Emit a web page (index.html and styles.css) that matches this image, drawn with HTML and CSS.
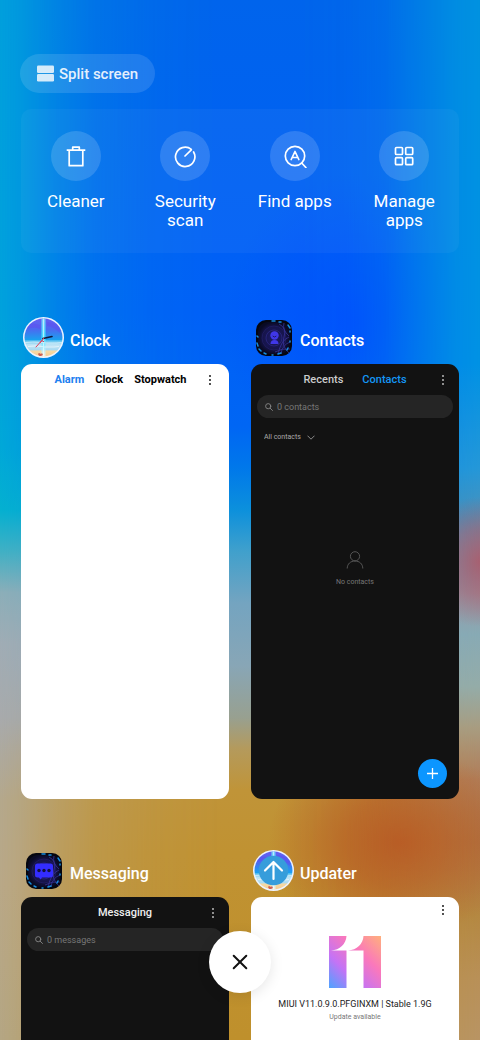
FILE: index.html
```html
<!DOCTYPE html>
<html lang="en">
<head>
<meta charset="utf-8">
<meta name="viewport" content="width=device-width, initial-scale=1">
<title>Recent apps</title>
<link rel="stylesheet" href="styles.css">
</head>
<body>
<svg class="defs" width="0" height="0" aria-hidden="true">
  <defs>
    <linearGradient id="sky" x1="0" y1="0" x2="0" y2="1">
      <stop offset="0" stop-color="#6a5cf2"/><stop offset=".3" stop-color="#4b6af0"/><stop offset=".55" stop-color="#1ba0f0"/><stop offset=".58" stop-color="#5fc4f0"/><stop offset=".68" stop-color="#c4e6f6"/><stop offset=".8" stop-color="#a9daf2"/><stop offset=".83" stop-color="#f6d9a4"/><stop offset="1" stop-color="#f4c98c"/>
    </linearGradient>
    <linearGradient id="beam" x1="0" y1="0" x2="0" y2="1">
      <stop offset="0" stop-color="#7fe6ff" stop-opacity=".8"/><stop offset=".5" stop-color="#45dcff"/><stop offset="1" stop-color="#fff" stop-opacity=".7"/>
    </linearGradient>
    <linearGradient id="rainbow" x1="0" y1="1" x2="1" y2="0">
      <stop offset="0" stop-color="#4da3ff"/><stop offset=".32" stop-color="#c473f5"/><stop offset=".65" stop-color="#fa78bb"/><stop offset="1" stop-color="#ffb07c"/>
    </linearGradient>
    <radialGradient id="night">
      <stop offset="0" stop-color="#1d1b68"/><stop offset=".7" stop-color="#16144a"/><stop offset="1" stop-color="#090a24"/>
    </radialGradient>
    <clipPath id="disc"><circle cx="20.500" cy="20.500" r="19"/></clipPath>
    <symbol id="beach" viewBox="0 0 41 41">
      <circle cx="20.500" cy="20.500" r="20.500" fill="#eef4ff"/>
      <g clip-path="url(#disc)">
        <path fill="url(#sky)" d="M0 0h41v41H0z"/>
        <path fill="#6b3df0" opacity=".3" d="M2 8q7-3 15 0v4q-8-3-15 1zM24 5q8 0 13 6v5q-6-6-13-7z"/>
        <path fill="url(#beam)" d="M18.500 0h4v41h-4z"/>
        <path fill="#fff" opacity=".55" d="M20 0h1v41h-1zM2 25q9-1 17 0t20 0v1q-10 1-20 0t-17 0zM5 29q8-1 14 0t17 0v1q-10 1-17 0t-14 0z"/>
        <path fill="#c6423c" opacity=".8" d="M15 37l1-1 2 1 1-1 1 2-2 1h-2z"/>
      </g>
    </symbol>
    <symbol id="neon" viewBox="0 0 36 36">
      <rect width="36" height="36" rx="10" fill="#05060f"/>
      <rect x="2" y="2" width="32" height="32" rx="10" fill="url(#night)"/>
      <g fill="none" stroke="#413bb0" stroke-width=".8" opacity=".8">
        <path d="M22 34q3-14 11-17M25 34q1-9 9-12M23 4q8 4 5 13t5 16M28 3q-2 7 5 13M19 32q7-4 15-3"/>
        <circle cx="18" cy="18" r="12" opacity=".35"/><circle cx="18" cy="18" r="8" opacity=".6"/>
      </g>
      <path fill="none" stroke="#168de0" stroke-width="1.500" stroke-linecap="round" d="M16 1h3M23 2h2M32 5l2 3M34 11v1M1 16l1 1M1 23l1 3M3 29l2 2M8 33l2 1M16 35h1M22 34l3-1M31 30l1-2M34 22v-1"/>
    </symbol>
    <symbol id="dots" viewBox="0 0 4 12">
      <g fill="currentColor"><circle cx="2" cy="2" r=".9"/><circle cx="2" cy="6" r=".9"/><circle cx="2" cy="10" r=".9"/></g>
    </symbol>
    <symbol id="search" viewBox="0 0 8 8">
      <g fill="none" stroke="currentColor" stroke-width=".9" stroke-linecap="round"><circle cx="3.200" cy="3.200" r="2.600"/><path d="M5.200 5.200L7.500 7.500"/></g>
    </symbol>
  </defs>
</svg>

<main class="recents">
  <button class="split" type="button">
    <svg width="17" height="17" viewBox="0 0 17 17" aria-hidden="true"><g fill="currentColor" opacity=".9"><rect y=".5" width="17" height="7.500" rx="1.300"/><rect y="9" width="17" height="7.500" rx="1.300"/></g></svg>
    Split screen
  </button>

  <nav class="tools" aria-label="Tools">
    <button class="tool" type="button">
      <span class="tool-icon"><svg width="24" height="24" viewBox="0 0 24 24" fill="none" stroke="currentColor" stroke-width="1.700" aria-hidden="true"><path d="M2.700 6.200h18.600M5.200 6.200v15.500h13.600V6.200M8.700 6V3.200h6.600V6" stroke-linejoin="round"/></svg></span>
      <span class="tool-label">Cleaner</span>
    </button>
    <button class="tool" type="button">
      <span class="tool-icon"><svg width="24" height="24" viewBox="0 0 24 24" fill="none" stroke="currentColor" stroke-width="1.700" stroke-linecap="round" aria-hidden="true"><path d="M12 12l6.300-6.200M18.300 5.300A9.700 9.700 0 1 0 20.600 8"/></svg></span>
      <span class="tool-label">Security scan</span>
    </button>
    <button class="tool" type="button">
      <span class="tool-icon"><svg width="24" height="24" viewBox="0 0 24 24" fill="none" stroke="currentColor" stroke-width="1.700" stroke-linecap="round" stroke-linejoin="round" aria-hidden="true"><circle cx="12" cy="12" r="9.700"/><path d="M18.700 19l4.200 4.500M8.200 15.500L12 7.500l3.800 8M9.500 13.500h5"/></svg></span>
      <span class="tool-label">Find apps</span>
    </button>
    <button class="tool" type="button">
      <span class="tool-icon"><svg width="24" height="24" viewBox="0 0 24 24" fill="none" stroke="currentColor" stroke-width="1.700" aria-hidden="true"><rect x="3.500" y="3.500" width="7" height="7" rx="1"/><rect x="13.700" y="3.500" width="7" height="7" rx="1"/><rect x="3.500" y="13.700" width="7" height="7" rx="1"/><rect x="13.700" y="13.700" width="7" height="7" rx="1"/></svg></span>
      <span class="tool-label">Manage apps</span>
    </button>
  </nav>

  <div class="tasks">
    <section class="task">
      <h2 class="task-title">
        <span class="app-icon"><svg width="41" height="41" viewBox="0 0 41 41" aria-hidden="true"><use href="#beach"/><path d="M20 21.500l9-2" stroke="#10183c" stroke-width="1.600" stroke-linecap="round"/><path d="M21 21l-8 9" stroke="#e0405c" stroke-width="1" stroke-linecap="round"/><path d="M17 26q2-4 4-1" fill="none" stroke="#e0405c"/></svg></span>
        Clock
      </h2>
      <article class="card light">
        <header class="card-bar">
          <div class="tabs clock-tabs">
            <button class="tab active" type="button">Alarm</button>
            <button class="tab" type="button">Clock</button>
            <button class="tab" type="button">Stopwatch</button>
          </div>
          <button class="more clock-more" type="button" aria-label="More options"><svg width="4" height="12"><use href="#dots"/></svg></button>
        </header>
      </article>
    </section>

    <section class="task">
      <h2 class="task-title">
        <span class="app-icon"><svg width="36" height="36" viewBox="0 0 36 36" aria-hidden="true"><use href="#neon"/><circle cx="18.500" cy="15.500" r="4.200" fill="#4037e8"/><path d="M14.500 24q0-4 4-4t4 4z" fill="#4037e8"/><path d="M16.700 16q1.800 2 3.600 0" fill="none" stroke="#1d1b68"/></svg></span>
        Contacts
      </h2>
      <article class="card dark">
        <header class="card-bar">
          <div class="tabs wide">
            <button class="tab" type="button">Recents</button>
            <button class="tab active" type="button">Contacts</button>
          </div>
          <button class="more" type="button" aria-label="More options"><svg width="4" height="12"><use href="#dots"/></svg></button>
        </header>
        <label class="search"><svg width="8" height="8" aria-hidden="true"><use href="#search"/></svg><input type="search" placeholder="0 contacts" aria-label="Search contacts"></label>
        <label class="filter">
          <select aria-label="Contact filter"><option>All contacts</option></select>
          <svg width="8" height="5" viewBox="0 0 8 5" fill="none" stroke="currentColor" stroke-width=".8" aria-hidden="true"><path d="M.5.7L4 4.200 7.500.7"/></svg>
        </label>
        <div class="empty">
          <svg width="18" height="18" viewBox="0 0 18 18" fill="none" stroke="currentColor" aria-hidden="true"><circle cx="9" cy="5.300" r="4.600"/><path d="M1.200 17.500C1.200 12.800 4.700 10 9 10s7.800 2.800 7.800 7.500"/></svg>
          <p>No contacts</p>
        </div>
        <button class="add" type="button" aria-label="Add contact"><svg width="13" height="13" viewBox="0 0 13 13" stroke="currentColor" stroke-width="1.300" aria-hidden="true"><path d="M6.500 1v11M1 6.500h11"/></svg></button>
      </article>
    </section>

    <section class="task">
      <h2 class="task-title">
        <span class="app-icon"><svg width="36" height="36" viewBox="0 0 36 36" aria-hidden="true"><use href="#neon"/><path fill="#332dff" d="M11.500 10.500h13a2.500 2.500 0 0 1 2.500 2.500v9a2.500 2.500 0 0 1-2.500 2.500H16l-1.500 2-1.500-2h-1.500A2.500 2.500 0 0 1 9 22v-9a2.500 2.500 0 0 1 2.500-2.500z"/><g fill="#11113c"><circle cx="13" cy="17.500" r="1.700"/><circle cx="18" cy="17.500" r="1.700"/><circle cx="23" cy="17.500" r="1.700"/></g></svg></span>
        Messaging
      </h2>
      <article class="card dark">
        <header class="card-bar">
          <h3 class="card-heading">Messaging</h3>
          <button class="more" type="button" aria-label="More options"><svg width="4" height="12"><use href="#dots"/></svg></button>
        </header>
        <label class="search"><svg width="8" height="8" aria-hidden="true"><use href="#search"/></svg><input type="search" placeholder="0 messages" aria-label="Search messages"></label>
      </article>
    </section>

    <section class="task">
      <h2 class="task-title">
        <span class="app-icon"><svg width="41" height="41" viewBox="0 0 41 41" aria-hidden="true"><use href="#beach"/><circle cx="20.500" cy="20.500" r="14.800" fill="#369ddb"/><path d="M20.500 29V12.500M12 20.500l8.500-8.500 8.500 8.500" fill="none" stroke="#fff" stroke-width="2.200" stroke-linecap="round" stroke-linejoin="round"/></svg></span>
        Updater
      </h2>
      <article class="card light">
        <header class="card-bar short">
          <button class="more" type="button" aria-label="More options"><svg width="4" height="12"><use href="#dots"/></svg></button>
        </header>
        <div class="update">
          <svg width="52" height="52" viewBox="0 0 52 52" role="img" aria-label="MIUI 11"><path fill="url(#rainbow)" d="M0 0h17.500C17 8 11 14 2 14.500h15.500V52H0zM52 0v52H34.500V14.500H19C28 14 34 8 34.500 0z"/></svg>
          <p class="version">MIUI V11.0.9.0.PFGINXM | Stable 1.9G</p>
          <p class="status">Update available</p>
        </div>
      </article>
    </section>
  </div>

  <button class="close" type="button" aria-label="Close all"><svg width="16" height="16" viewBox="0 0 16 16" stroke="currentColor" stroke-width="2" stroke-linecap="round" aria-hidden="true"><path d="M1.700 1.700l12.600 12.600M14.300 1.700L1.700 14.300"/></svg></button>
</main>
</body>
</html>
```
FILE: styles.css
```css
* {
  box-sizing: border-box;
}

body {
  margin: 0;
  font-family: Roboto, "Noto Sans", sans-serif;
}

button,
input,
select {
  margin: 0;
  padding: 0;
  border: 0;
  background: none;
  color: inherit;
  font: inherit;
}

svg {
  display: block;
  flex: none;
}

h2,
h3,
p {
  margin: 0;
}

.defs {
  position: absolute;
}

/* Blurred wallpaper: a centre column with a left and a right column faded over it */
.recents {
  position: relative;
  isolation: isolate;
  height: 100vh;
  overflow: hidden;
  padding: 54px 21px 0;
  color: #fff;
  background:
    radial-gradient(ellipse 130px 110px at 83% 81%, #b85c24, rgb(184 92 36 / 70%) 40%, transparent),
    radial-gradient(ellipse 130px 150px at 74% 31%, rgb(0 76 255 / 80%), transparent),
    linear-gradient(#0064ec, #005ff8 30%, #0066f4 41%, #0078ea 45%, #0c90dc 49%, #40a0cc 53%, #74a4c0 58%, #88a6b6 64%, #98a090 69%, #b49a5c 72%, #c09438 76%, #c09232 82%, #bf902c);
}

.recents::before,
.recents::after {
  content: "";
  position: absolute;
  z-index: -1;
  inset: 0;
}

.recents::before {
  background: linear-gradient(#009fdc, #00a2dc 30%, #00a8d8 43%, #04b0d0 49%, #40b0c4 53%, #8caeb8 57%, #a0acb4 62%, #a8aaac 69%, #b4a88c 77%, #b8a888 85%, #b4a684);
  mask-image: linear-gradient(to right, #000, rgb(0 0 0 / 88%) 4%, rgb(0 0 0 / 52%) 12%, rgb(0 0 0 / 26%) 20%, rgb(0 0 0 / 10%) 32%, transparent 46%);
}

.recents::after {
  background:
    radial-gradient(ellipse 65px 65px at 100% 54%, #a86070, rgb(168 96 112 / 60%) 50%, transparent),
    radial-gradient(ellipse 130px 90px at 84% 81%, #b9602a, transparent),
    linear-gradient(#0092e0, #0092e4 35%, #2498d8 45%, #4c90b8 50%, #9a98a4 57%, #88aab4 61%, #94aca8 66%, #a89c80 70%, #b07c58 75%, #ac7444 81%, #b48842 88%, #b89058 94%, #b89464);
  mask-image: linear-gradient(to left, #000, rgb(0 0 0 / 88%) 5%, rgb(0 0 0 / 52%) 13%, rgb(0 0 0 / 20%) 20%, rgb(0 0 0 / 6%) 28%, transparent 40%);
}

.split {
  display: flex;
  align-items: center;
  gap: 5px;
  height: 39px;
  padding: 0 17px;
  margin-left: -1px;
  border-radius: 20px;
  background: rgb(255 255 255 / 12%);
  font-size: 15px;
  font-weight: 500;
  color: rgb(255 255 255 / 90%);
}

.tools {
  display: grid;
  grid-template-columns: repeat(4, 1fr);
  margin-top: 16px;
  padding: 22px 0;
  min-height: 144px;
  border-radius: 10px;
  background: rgb(255 255 255 / 4%);
}

.tool {
  display: flex;
  flex-direction: column;
  align-items: center;
  gap: 11px;
}

.tool-icon {
  display: grid;
  place-items: center;
  width: 50px;
  height: 50px;
  border-radius: 50%;
  background: rgb(255 255 255 / 15%);
}

.tool-label {
  padding: 0 16px;
  font-size: 17px;
  line-height: 19px;
}

.tasks {
  display: grid;
  grid-template-columns: 1fr 1fr;
  column-gap: 22px;
  row-gap: 51px;
  margin-top: 64px;
}

.task-title {
  display: flex;
  align-items: flex-start;
  gap: 6px;
  height: 47px;
  padding-left: 2px;
  font-size: 16px;
  font-weight: 500;
  line-height: 48px;
}

.app-icon {
  display: grid;
  place-items: center;
  width: 41px;
  height: 41px;
}

.card {
  display: flex;
  flex-direction: column;
  height: 435px;
  border-radius: 11px;
  overflow: hidden;
}

.light {
  background: #fff;
  color: #000;
}

.dark {
  background: #121212;
  color: #ccc;
}

.card-bar {
  display: grid;
  grid-template-columns: 24px 1fr 24px;
  align-items: center;
  height: 31px;
}

.card-bar.short {
  height: 25px;
}

.tabs {
  display: flex;
  grid-column: 2;
  justify-content: center;
  gap: 11px;
  font-size: 11px;
  font-weight: 700;
}

.clock-tabs {
  padding-right: 9px;
}

.tabs.wide {
  gap: 19px;
  font-weight: 500;
}

.tab.active {
  color: #2080f0;
}

.dark .tab.active {
  color: #1496f6;
}

.card-heading {
  grid-column: 2;
  text-align: center;
  font-size: 11px;
  font-weight: 500;
  color: #eee;
}

.more {
  grid-column: 3;
  padding-left: 6px;
}

.clock-more {
  padding-left: 3px;
}

.search {
  display: flex;
  align-items: center;
  gap: 4px;
  height: 23px;
  margin: 0 6px;
  padding: 0 8px;
  border-radius: 12px;
  background: #252525;
  color: #888;
}

.search input {
  flex: 1;
  min-width: 0;
  outline: 0;
  appearance: none;
  font-size: 9px;
}

.search input::placeholder {
  color: #777;
}

.filter {
  display: flex;
  align-items: center;
  gap: 6px;
  margin: 14px 13px 0;
  color: #aaa;
}

.filter select {
  appearance: none;
  font-size: 7px;
  line-height: 10px;
}

.empty {
  display: flex;
  flex-direction: column;
  align-items: center;
  gap: 8px;
  margin-top: 109px;
  color: #555;
  font-size: 7px;
  line-height: 10px;
}

.empty p {
  color: #777;
}

.add {
  display: grid;
  place-items: center;
  width: 29px;
  height: 29px;
  margin: auto 12px 11px auto;
  border-radius: 50%;
  background: #0c96ff;
  color: #fff;
}

.update {
  display: flex;
  flex-direction: column;
  align-items: center;
  padding-top: 14px;
  white-space: nowrap;
}

.version {
  margin-top: 10px;
  font-size: 9px;
  line-height: 12px;
  color: #222;
}

.status {
  margin-top: 2px;
  font-size: 7px;
  line-height: 10px;
  color: #777;
}

.close {
  position: fixed;
  bottom: 47px;
  left: calc(50% - 31px);
  display: grid;
  place-items: center;
  width: 62px;
  height: 62px;
  border-radius: 50%;
  background: #fff;
  color: #111;
  box-shadow: 0 3px 14px rgb(0 0 0 / 10%);
}
```
